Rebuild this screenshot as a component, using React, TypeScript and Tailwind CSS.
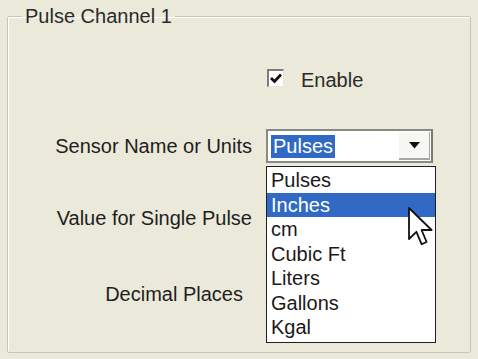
import React from "react";

const items = ["Pulses", "Inches", "cm", "Cubic Ft", "Liters", "Gallons", "Kgal"];

export default function App() {
  return (
    <div
      className="w-[478px] h-[359px] bg-[#ebe9da] overflow-hidden text-[20px] text-[#1e1e1e] leading-[22px]"
      style={{ fontFamily: '"Liberation Sans", Arial, sans-serif' }}
    >
      <fieldset className="ml-[7px] mr-[7px] mt-[5px] h-[348px] border border-[#c8c6b6] shadow-[inset_1px_1px_0_#ffffff] rounded-[2px] px-0 pb-0 relative">
        <legend className="ml-[14px] px-[3px] leading-[22px] text-[#2a2a2a]">Pulse Channel 1</legend>

        {/* Enable row */}
        <div className="flex items-center mt-[42px] h-[18px]">
          <div className="w-[244px] shrink-0" />
          <div className="ml-[15px] flex items-center">
            <div className="w-[17px] h-[18px] bg-white border-t-2 border-l-2 border-[#7d7d7d] border-r border-b border-r-[#e6e4d8] border-b-[#e6e4d8] flex items-center justify-center">
              <svg width="12" height="11" viewBox="0 0 12 11">
                <path d="M1 5 L4.5 8.5 L11 1.5" stroke="#111" strokeWidth="2.8" fill="none" />
              </svg>
            </div>
            <span className="ml-[17px] mt-[4px] text-[#2a2a2a]">Enable</span>
          </div>
        </div>

        {/* Sensor name row */}
        <div className="flex items-center mt-[42px] h-[34px]">
          <div className="w-[244px] shrink-0 text-right">Sensor Name or Units</div>
          <div className="ml-[14px] relative">
            <div className="w-[167px] h-[34px] bg-white border-2 border-[#8a8a85] border-r-[#7a7a75] flex items-center pl-[3px] pr-[1px]">
              <span className="bg-[#316ac5] text-white px-[2px] h-[23px] leading-[23px]">Pulses</span>
              <div className="ml-auto w-[31px] h-[28px] bg-[#f7f7f4] border-r border-b-2 border-[#a8a8a0] flex items-center justify-center">
                <svg width="11" height="7" viewBox="0 0 11 7">
                  <path d="M0 0 H11 L5.5 6.5 Z" fill="#111" />
                </svg>
              </div>
            </div>

            {/* dropdown list */}
            <div className="absolute left-0 top-[37px] w-[170px] h-[177px] bg-white border border-[#202020] pt-[1px] z-10">
              {items.map((it, i) => (
                <div
                  key={it}
                  className={
                    i === 1
                      ? "h-[24.5px] leading-[24.5px] pl-[4px] bg-[#316ac5] text-white"
                      : "h-[24.5px] leading-[24.5px] pl-[4px] text-[#1a1a1a]"
                  }
                >
                  {it}
                </div>
              ))}
            </div>

            {/* cursor */}
            <svg
              className="absolute left-[142px] top-[78px] z-20"
              width="26"
              height="40"
              viewBox="0 0 13 20"
            >
              <path
                d="M0.5 0.5 L0.5 16 L4.2 12.4 L6.8 18.6 L9.3 17.5 L6.8 11.5 L11.8 11.5 Z"
                fill="#ffffff"
                stroke="#111"
                strokeWidth="0.9"
                strokeLinejoin="round"
              />
            </svg>
          </div>
        </div>

        {/* Value row */}
        <div className="flex items-center mt-[38px] h-[34px]">
          <div className="w-[244px] shrink-0 text-right">Value for Single Pulse</div>
        </div>

        {/* Decimal row */}
        <div className="flex items-center mt-[42px] h-[34px]">
          <div className="w-[235px] shrink-0 text-right">Decimal Places</div>
        </div>
      </fieldset>
    </div>
  );
}
